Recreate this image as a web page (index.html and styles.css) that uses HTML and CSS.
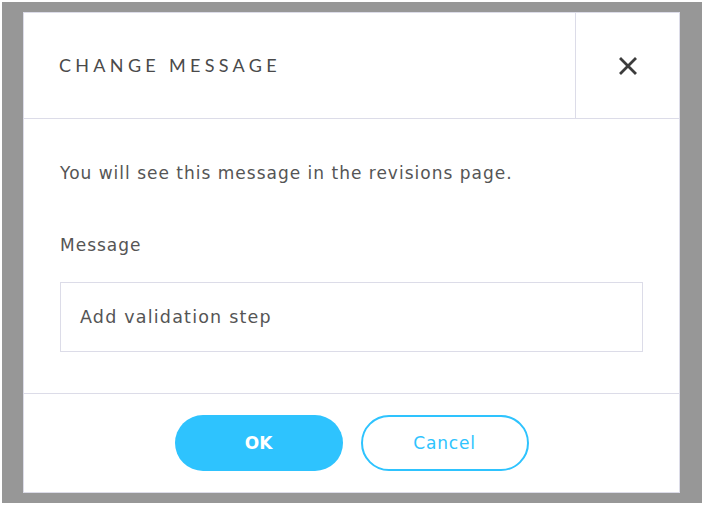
FILE: index.html
```html
<!DOCTYPE html>
<html>
<head>
<meta charset="utf-8">
<link rel="stylesheet" href="styles.css">
</head>
<body>
<div class="frame">
  <div class="dialog">
    <div class="header">
      <div class="title">CHANGE MESSAGE</div>
      <button class="close" aria-label="Close">
        <svg width="20" height="20" viewBox="0 0 20 20"><path d="M3 3 L17 17 M17 3 L3 17" stroke="#3c3c3c" stroke-width="2.8" stroke-linecap="square"/></svg>
      </button>
    </div>
    <div class="body">
      <p class="info">You will see this message in the revisions page.</p>
      <label class="label">Message</label>
      <div class="input">Add validation step</div>
    </div>
    <div class="footer">
      <button class="btn btn-ok">OK</button>
      <button class="btn btn-cancel">Cancel</button>
    </div>
  </div>
</div>
</body>
</html>
```
FILE: styles.css
```css
html, body { margin: 0; padding: 0; background: #fff; }
body { font-family: "DejaVu Sans", sans-serif; color: #555; }
.frame {
  margin: 2px 3px 4px 2px;
  background: #979797;
  padding: 10px 22px 10px 21px;
}
.dialog {
  background: #fff;
  border: 1px solid #dcdce8;
  height: 479px;
  display: flex;
  flex-direction: column;
}
.header {
  display: flex;
  height: 105px;
  border-bottom: 1px solid #dcdce8;
}
.title {
  flex: 1;
  display: flex;
  align-items: center;
  padding-left: 35px;
  padding-bottom: 2px;
  font-family: "Lato", sans-serif;
  font-size: 18px;
  letter-spacing: 4.3px;
  color: #4a4a4a;
}
.close {
  width: 104px;
  border: none;
  border-left: 1px solid #dcdce8;
  background: #fff;
  display: flex;
  align-items: center;
  justify-content: center;
  padding: 0;
}
.body {
  flex: 1;
  padding: 0 36px;
  border-bottom: 1px solid #dcdce8;
}
.info {
  margin: 44px 0 0;
  font-size: 17px;
  letter-spacing: 1px;
  line-height: 20px;
}
.label {
  display: block;
  margin-top: 52px;
  font-size: 17px;
  letter-spacing: 1px;
  line-height: 20px;
}
.input {
  box-sizing: border-box;
  margin-top: 27px;
  height: 70px;
  border: 1px solid #dcdce8;
  display: flex;
  align-items: center;
  padding-left: 19px;
  font-size: 17.5px;
  letter-spacing: 1.2px;
  color: #555;
}
.footer {
  height: 98px;
  display: flex;
  justify-content: center;
  align-items: center;
  gap: 18px;
}
.btn {
  width: 168px;
  height: 56px;
  border-radius: 28px;
  font-family: "DejaVu Sans", sans-serif;
  font-size: 17px;
  cursor: pointer;
}
.btn-ok {
  background: #2ec3fe;
  border: none;
  color: #fff;
  font-weight: bold;
}
.btn-cancel {
  background: #fff;
  border: 2px solid #2ec3fe;
  color: #2ec3fe;
  letter-spacing: 0.8px;
}
```
